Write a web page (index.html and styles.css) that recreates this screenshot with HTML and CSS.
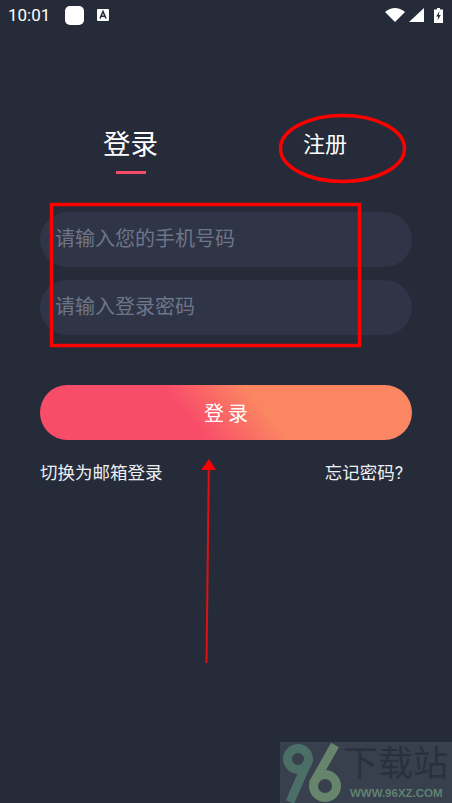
FILE: index.html
```html
<!DOCTYPE html>
<html lang="zh">
<head>
  <meta charset="UTF-8" />
  <meta name="viewport" content="width=device-width, initial-scale=1.0" />
  <title>登录</title>
  <link rel="stylesheet" href="styles.css">
</head>
<body>
  <div class="status-bar">
    <span class="time">10:01</span>
    <span class="app-square"></span>
    <svg class="app-a" viewBox="0 0 12 12"><rect width="12" height="12" rx="1" fill="#fff"/><path d="M3 9.500 6 2.500l3 7M4.200 7.200h3.600" fill="none" stroke="#252b39" stroke-width="1.500"/></svg>
    <span class="status-gap"></span>
    <svg class="wifi" viewBox="0 0 20 14"><path d="M0 4Q10-4 20 4L10 14Z" fill="#fff"/></svg>
    <svg class="signal" viewBox="0 0 15 14"><path d="M15 0V14H0Z" fill="#fff"/></svg>
    <svg class="battery" viewBox="0 0 9 15"><path d="M3 0h3v1.500h3V15H0V1.500h3Z" fill="#fff"/><path d="M5.500 3 2.200 8.500h2L3.500 12.500 6.800 7h-2Z" fill="#252b39"/></svg>
  </div>

  <!-- Вкладки -->
  <div class="tabs">
    <div class="tab active">登录<span class="tab-line"></span></div>
    <div class="tab">注册</div>
  </div>

  <form class="login-form">
    <div class="field">请输入您的手机号码</div>
    <div class="field">请输入登录密码</div>
    <button class="submit" type="button"><span>登</span><span>录</span></button>
    <div class="links">
      <span>切换为邮箱登录</span>
      <span>忘记密码?</span>
    </div>
  </form>

  <!-- Пометки поверх скриншота -->
  <svg class="marks" viewBox="0 0 452 803">
    <ellipse cx="342.500" cy="148.500" rx="62" ry="33" fill="none" stroke="#f00" stroke-width="3.500"/>
    <rect x="51.500" y="204.500" width="308" height="141" fill="none" stroke="#f00" stroke-width="3.500"/>
    <path d="M206.500 663 208.800 468" fill="none" stroke="#e01010" stroke-width="2"/>
    <path d="M201 470 209 459 216 470Z" fill="#f00"/>
  </svg>

  <div class="watermark">
    <svg class="wm-logo" viewBox="0 0 63 61">
      <circle cx="18" cy="17" r="10.500" fill="none" stroke="#4b6f66" stroke-width="9"/>
      <path d="M27 21 10 60" fill="none" stroke="#4b6f66" stroke-width="9"/>
      <path d="M55 3 33 42" fill="none" stroke="#67856d" stroke-width="9"/>
      <circle cx="45" cy="44" r="11.500" fill="none" stroke="#67856d" stroke-width="9"/>
    </svg>
    <div class="wm-text">
      <div class="wm-title">下载站</div>
      <div class="wm-url">WWW.96XZ.COM</div>
    </div>
  </div>
</body>
</html>
```

FILE: styles.css
```css
* { box-sizing: border-box; }
body {
  margin: 0;
  width: 452px;
  height: 803px;
  overflow: hidden;
  position: relative;
  background: #252b39;
  color: #fff;
  font-family: "Roboto", "Noto Sans CJK SC", sans-serif;
}
.status-bar {
  height: 30px;
  padding: 0 9px 0 8px;
  display: flex;
  align-items: center;
}
.time { font-size: 17px; width: 57px; }
.app-square {
  width: 19px;
  height: 19px;
  border-radius: 5px;
  background: #fff;
  margin-right: 13px;
}
.app-a { width: 12px; height: 12px; }
.status-gap { flex: 1; }
.wifi { width: 20px; height: 14px; margin-right: 4px; }
.signal { width: 15px; height: 14px; margin-right: 10px; }
.battery { width: 9px; height: 15px; }
.tabs {
  display: flex;
  height: 182px;
  padding-top: 99px;
}
.tab {
  font-size: 22px;
  line-height: 32px;
  position: relative;
  height: 32px;
}
.tab.active {
  font-size: 27.500px;
  line-height: 32px;
  margin-left: 103px;
  margin-right: 145px;
}
.tab-line {
  position: absolute;
  left: 13px;
  top: 42px;
  width: 30px;
  height: 3px;
  background: #f74c68;
}
.login-form {
  padding: 0 40px;
  display: flex;
  flex-direction: column;
}
.field {
  height: 55px;
  border-radius: 28px;
  background: #2f3547;
  color: #6e7588;
  font-size: 20px;
  line-height: 55px;
  padding-left: 15px;
  margin-bottom: 13px;
}
.submit {
  height: 55px;
  margin-top: 37px;
  border: none;
  border-radius: 28px;
  background: linear-gradient(51deg, #f84d69 0%, #f84d69 40%, #fb8762 60%, #fb8762 100%);
  color: #fff;
  font-family: inherit;
  font-size: 20px;
  display: flex;
  justify-content: center;
  align-items: center;
  gap: 4px;
}
.links {
  display: flex;
  justify-content: space-between;
  padding: 21px 9px 0 0;
  font-size: 17.500px;
  line-height: 24px;
  color: #eef0f3;
}
.marks {
  position: absolute;
  left: 0;
  top: 0;
  width: 452px;
  height: 803px;
}
.watermark {
  position: absolute;
  left: 280px;
  top: 742px;
  width: 172px;
  height: 61px;
  background: rgba(70, 77, 92, 0.6);
  display: flex;
}
.wm-logo {
  width: 63px;
  height: 61px;
  flex: none;
}
.wm-text { padding-top: 2px; }
.wm-title {
  font-size: 35px;
  line-height: 42px;
  color: #2a3040;
  white-space: nowrap;
}
.wm-url {
  font-family: "Liberation Sans", sans-serif;
  font-weight: 700;
  font-size: 11.500px;
  line-height: 12px;
  color: #5f8270;
  margin: 1px 0 0 7px;
  white-space: nowrap;
}
```
